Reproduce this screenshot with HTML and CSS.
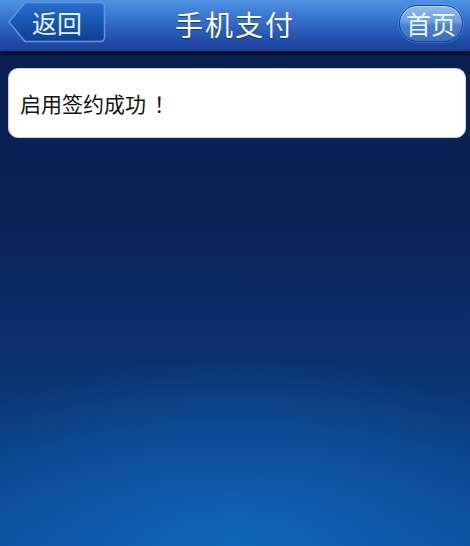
FILE: index.html
```html
<!DOCTYPE html>
<html lang="zh-CN">
<head>
<meta charset="utf-8">
<title>手机支付</title>
<link rel="stylesheet" href="styles.css">
</head>
<body>
<div class="page">
  <header class="topbar">
    <a class="back-btn" href="#">
      <svg class="back-shape" viewBox="0 0 98 42" preserveAspectRatio="none" aria-hidden="true">
        <defs>
          <linearGradient id="bg1" x1="0" y1="0" x2="0" y2="1">
            <stop offset="0" stop-color="#2a6fcf"/>
            <stop offset="0.5" stop-color="#1656b4"/>
            <stop offset="1" stop-color="#0f3f93"/>
          </linearGradient>
        </defs>
        <path d="M1 21 L17 1.5 L92 1.5 Q96.5 1.5 96.5 6 L96.5 36 Q96.5 40.5 92 40.5 L17 40.5 Z" fill="url(#bg1)" stroke="#5d96dc" stroke-width="1.5"/>
      </svg>
      <span class="btn-label">返回</span>
    </a>
    <h1 class="title">手机支付</h1>
    <a class="home-btn" href="#"><span class="btn-label">首页</span></a>
  </header>
  <main class="content">
    <div class="card">启用签约成功<span class="bang">！</span></div>
  </main>
</div>
</body>
</html>
```
FILE: styles.css
```css
html, body {
  margin: 0;
  padding: 0;
}
body {
  font-family: "Noto Sans CJK SC", "Noto Sans", sans-serif;
  background: #0a1c4c;
}
.page {
  width: 470px;
  height: 546px;
  overflow: hidden;
  display: flex;
  flex-direction: column;
  background:
    radial-gradient(ellipse 360px 190px at 50% 100%, rgba(20, 110, 200, 0.75), rgba(20, 100, 190, 0) 100%),
    linear-gradient(to bottom, #08183f 0px, #0b1f52 60px, #0b2358 230px, #0b3473 380px, #0b4c98 546px);
}
.topbar {
  height: 52px;
  box-sizing: border-box;
  padding: 0 8px 4px 8px;
  display: grid;
  grid-template-columns: 1fr auto 1fr;
  align-items: center;
  background: linear-gradient(to bottom, #4f92e2 0%, #356fcc 40%, #2450ae 75%, #1b3f99 100%);
  border-bottom: 1px solid #081840;
  box-shadow: 0 3px 4px rgba(3, 10, 35, 0.8);
}
.back-btn {
  position: relative;
  justify-self: start;
  width: 98px;
  height: 42px;
  display: flex;
  align-items: center;
  justify-content: center;
  text-decoration: none;
  margin-top: -3px;
}
.back-shape {
  position: absolute;
  inset: 0;
  width: 100%;
  height: 100%;
}
.back-btn .btn-label {
  position: relative;
  font-size: 25px;
  color: #e2f4ff;
  line-height: 1;
}
.title {
  margin: 0;
  font-size: 28px;
  font-weight: normal;
  color: #ffffff;
  line-height: 1;
  letter-spacing: 2px;
  text-shadow: 0 1px 1px rgba(10, 30, 90, 0.6);
}
.home-btn {
  justify-self: end;
  width: 64px;
  height: 37px;
  box-sizing: border-box;
  border-radius: 19px;
  border: 1px solid #1c3f8c;
  background: linear-gradient(to bottom, #8cbcf0 0%, #6b9fe0 45%, #4a80cc 55%, #3c6fbf 100%);
  box-shadow: inset 0 1px 1px rgba(255, 255, 255, 0.5), 0 0 0 1px rgba(120, 170, 230, 0.35);
  display: flex;
  align-items: center;
  justify-content: center;
  text-decoration: none;
  margin-right: -1px;
}
.home-btn .btn-label {
  font-size: 25px;
  color: #f0f7ff;
  line-height: 1;
}
.content {
  padding: 16px 4px 0 8px;
}
.card {
  height: 70px;
  box-sizing: border-box;
  border-radius: 10px;
  background: #ffffff;
  border: 1px solid #c9d3e6;
  padding: 0 11px;
  display: flex;
  align-items: center;
  font-size: 21px;
  color: #111111;
}
.bang {
  margin-left: 8px;
}
```
